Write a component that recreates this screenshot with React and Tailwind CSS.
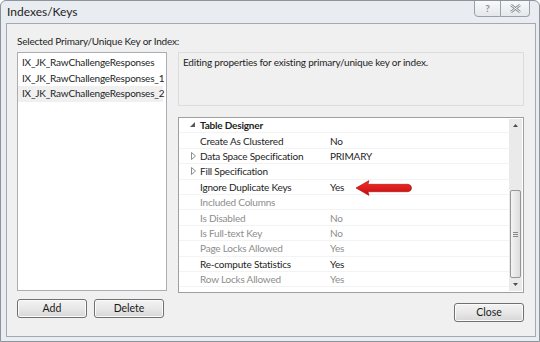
import React from 'react';

const font = { fontFamily: 'Lato, "Noto Sans", sans-serif' };

const props = [
  { label: 'Table Designer', cat: true, exp: 'open' },
  { label: 'Create As Clustered', value: 'No' },
  { label: 'Data Space Specification', value: 'PRIMARY', exp: 'closed' },
  { label: 'Fill Specification', exp: 'closed' },
  { label: 'Ignore Duplicate Keys', value: 'Yes', arrow: true },
  { label: 'Included Columns', dim: true },
  { label: 'Is Disabled', value: 'No', dim: true },
  { label: 'Is Full-text Key', value: 'No', dim: true },
  { label: 'Page Locks Allowed', value: 'Yes', dim: true },
  { label: 'Re-compute Statistics', value: 'Yes' },
  { label: 'Row Locks Allowed', value: 'Yes', dim: true },
];

const WinButton = ({ children, className = '' }) => (
  <button
    className={
      'h-[19px] rounded-[3px] border border-[#707070] bg-gradient-to-b from-[#f3f3f3] via-[#e8e8e8] to-[#d6d6d6] text-[10.5px] leading-none text-[#1a1a1a] shadow-[inset_0_0_0_1px_#fbfbfb] ' +
      className
    }
  >
    {children}
  </button>
);

const Expander = ({ kind }) =>
  kind === 'open' ? (
    <svg width="6" height="6" viewBox="0 0 6 6">
      <path d="M5 0 L5 5 L0 5 Z" fill="#595959" />
    </svg>
  ) : (
    <svg width="5" height="8" viewBox="0 0 5 8">
      <path d="M0.5 0.5 L4.5 4 L0.5 7.5 Z" fill="none" stroke="#8c8c8c" strokeWidth="1" />
    </svg>
  );

const RedArrow = () => (
  <svg width="58" height="16" viewBox="0 0 58 16">
    <defs>
      <linearGradient id="ra" x1="0" y1="0" x2="0" y2="1">
        <stop offset="0" stopColor="#f52f2f" />
        <stop offset="1" stopColor="#c30c0c" />
      </linearGradient>
    </defs>
    <path
      d="M1 8 L14 0.6 L13 4.3 L53 4.3 Q56.5 4.8 56.5 8 Q56.5 11.2 53 11.7 L13 11.7 L14 15.4 Z"
      fill="url(#ra)"
      stroke="#a80b0b"
      strokeWidth="0.6"
    />
  </svg>
);

const txt = 'text-[10px] tracking-[-0.2px]';

export default function App() {
  return (
    <div
      className="w-[540px] h-[342px] bg-[#e9ecf0] border border-[#8d939b] rounded-t-[6px] flex flex-col overflow-hidden"
      style={font}
    >
      {/* title bar */}
      <div className="h-[22px] flex items-start pl-[6px] pr-[9px]">
        <span className="mt-[4px] text-[12px] leading-[14px] text-[#1e1e1e]">Indexes/Keys</span>
        <div className="ml-auto flex -mt-px">
          <div className="w-[27px] h-[17px] border border-[#9aa0a8] rounded-bl-[4px] bg-gradient-to-b from-[#f8f9fa] to-[#e4e7eb] flex items-center justify-center text-[10px] font-bold text-[#8a8f96]">
            ?
          </div>
          <div className="w-[29px] h-[17px] border border-l-0 border-[#9aa0a8] rounded-br-[4px] bg-gradient-to-b from-[#f8f9fa] to-[#e4e7eb] flex items-center justify-center">
            <svg width="11" height="9" viewBox="0 0 11 9">
              <path d="M1 1 L10 8 M10 1 L1 8" stroke="#8a8f96" strokeWidth="2.6" />
              <path d="M1 1 L10 8 M10 1 L1 8" stroke="#f4f5f7" strokeWidth="1" />
            </svg>
          </div>
        </div>
      </div>

      {/* client area */}
      <div className="flex-1 ml-[5px] mr-[3px] mb-[4px] border border-[#a3a9b0] bg-[#f0f0f0] flex flex-col pl-[10px] pr-[11px] pt-[10px]">
        <div className={txt + ' leading-[14px] text-[#1e1e1e]'}>
          Selected Primary/Unique Key or Index:
        </div>
        <div className="flex gap-[11px] mt-[4px]">
          {/* left column */}
          <div className="w-[150px] flex flex-col">
            <div className="h-[239px] border border-[#abadb3] bg-white pt-[2px]">
              {[
                'IX_JK_RawChallengeResponses',
                'IX_JK_RawChallengeResponses_1',
                'IX_JK_RawChallengeResponses_2',
              ].map((n, i) => (
                <div
                  key={n}
                  className={
                    txt +
                    ' h-[15.5px] pl-[4px] leading-[15.5px] text-[#1e1e1e] whitespace-nowrap mr-[3px] ' +
                    (i === 2 ? 'bg-[#f0f0f0]' : '')
                  }
                >
                  {n}
                </div>
              ))}
            </div>
            <div className="flex gap-[7px] mt-[8px]">
              <WinButton className="w-[70px]">Add</WinButton>
              <WinButton className="w-[70px]">Delete</WinButton>
            </div>
          </div>

          {/* right column */}
          <div className="flex-1 flex flex-col">
            <div className={txt + ' h-[54px] border border-[#dcdcdc] bg-[#f0f0f0] pl-[4px] pt-[2px] leading-[15px] text-[#1e1e1e]'}>
              Editing properties for existing primary/unique key or index.
            </div>
            <div className="relative mt-[11px] h-[176px] border border-[#a0a0a0] bg-white flex">
              <div className="flex-1">
                {props.map((p) => (
                  <div
                    key={p.label}
                    className={txt + ' h-[15.4px] flex items-center border-b border-[#f3f3f3] leading-none'}
                  >
                    <div className="w-[21px] flex justify-end pr-[4px]">
                      {p.exp && <Expander kind={p.exp} />}
                    </div>
                    <div
                      className={
                        'w-[130px] whitespace-nowrap ' +
                        (p.cat ? 'font-bold text-[#1e1e1e]' : p.dim ? 'text-[#8d8d8d]' : 'text-[#1e1e1e]')
                      }
                    >
                      {p.label}
                    </div>
                    <div className={p.dim ? 'text-[#8d8d8d]' : 'text-[#1e1e1e]'}>{p.value}</div>
                  </div>
                ))}
              </div>
              {/* scrollbar */}
              <div className="w-[13px] my-[1px] mr-[1px] bg-[#eaeaea] flex flex-col items-stretch">
                <div className="h-[13px] flex items-center justify-center">
                  <svg width="5" height="3" viewBox="0 0 5 3">
                    <path d="M0 3 L2.5 0 L5 3 Z" fill="#4d4d4d" />
                  </svg>
                </div>
                <div className="flex-1" />
                <div className="h-[88px] mx-px border border-[#979797] rounded-[2px] bg-gradient-to-r from-[#f4f4f4] to-[#dcdcdc] flex flex-col items-center justify-center gap-[1px]">
                  <div className="w-[5px] h-px bg-[#888]" />
                  <div className="w-[5px] h-px bg-[#888]" />
                  <div className="w-[5px] h-px bg-[#888]" />
                </div>
                <div className="h-[13px] flex items-center justify-center">
                  <svg width="5" height="3" viewBox="0 0 5 3">
                    <path d="M0 0 L2.5 3 L5 0 Z" fill="#4d4d4d" />
                  </svg>
                </div>
              </div>
              {/* red arrow annotation */}
              <div className="absolute left-[176px] top-[62px]">
                <RedArrow />
              </div>
            </div>
            <div className="flex justify-end mt-[10px]">
              <WinButton className="w-[70px]">Close</WinButton>
            </div>
          </div>
        </div>
      </div>
    </div>
  );
}
